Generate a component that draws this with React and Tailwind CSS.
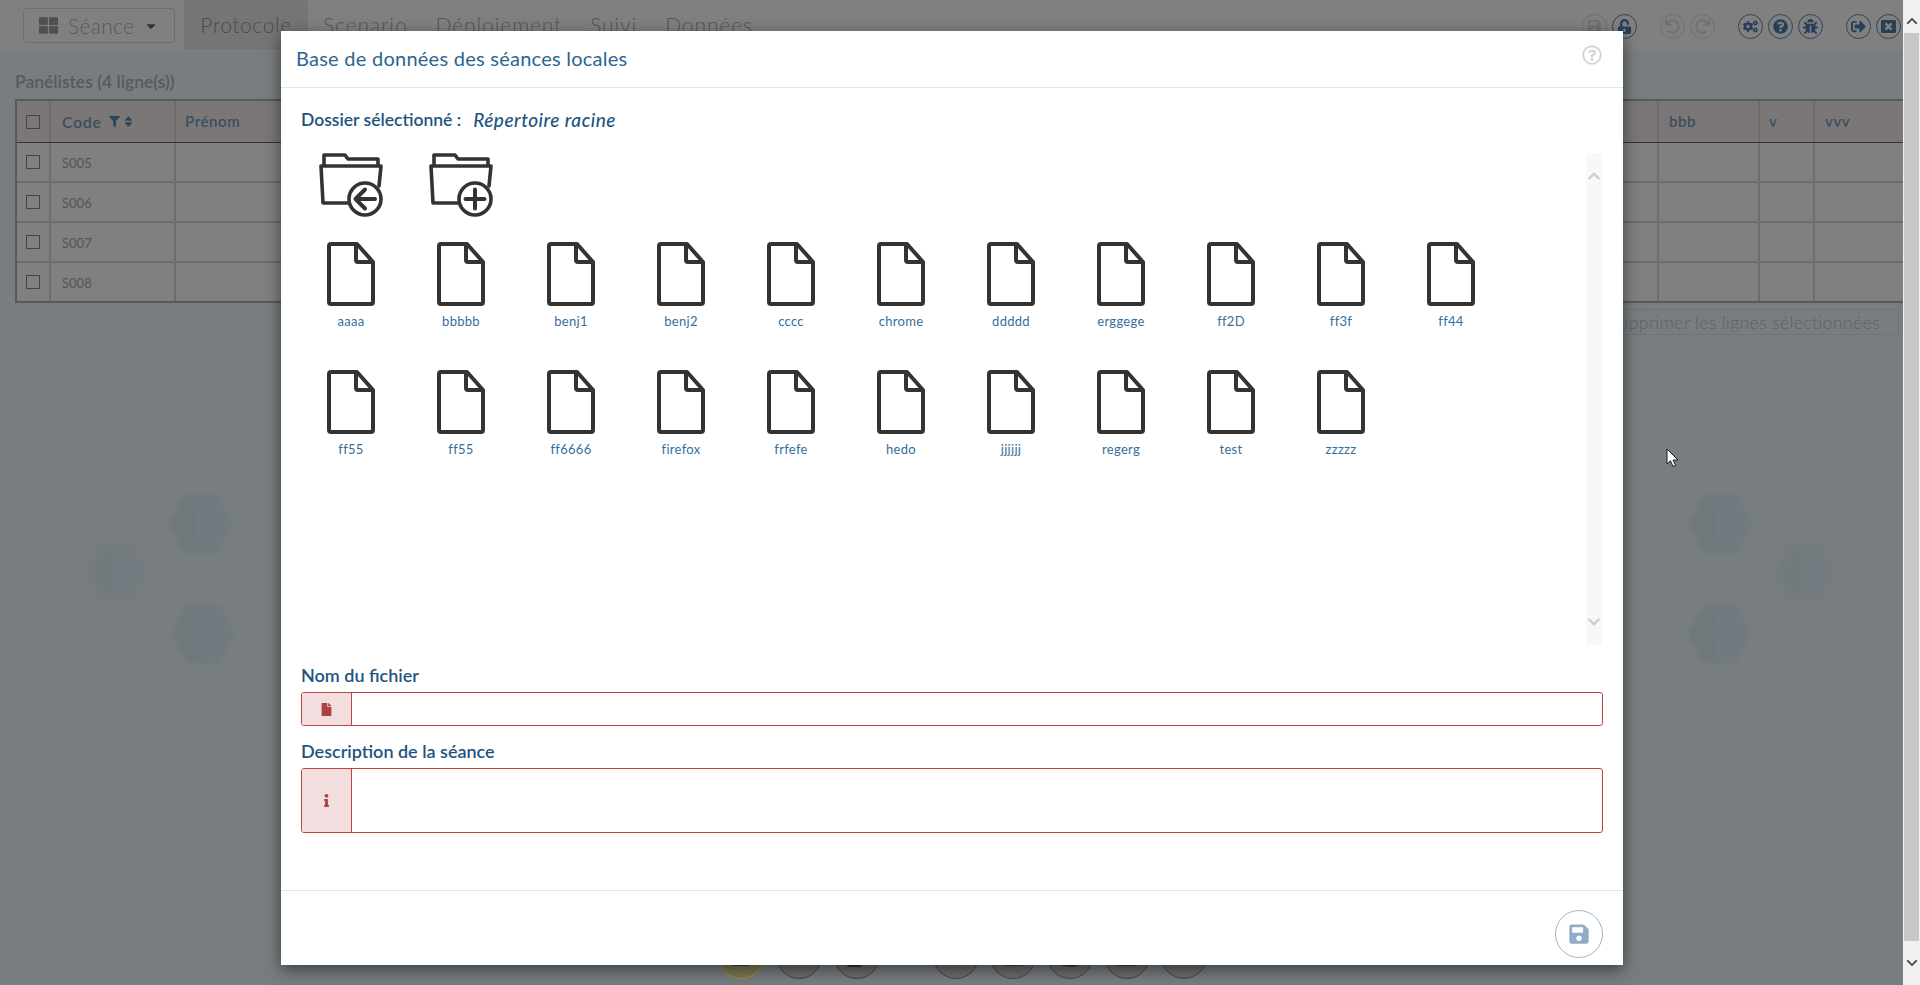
import React from 'react';
import {
  FaThLarge, FaCaretDown, FaFilter, FaSort, FaSave, FaUnlockAlt, FaUndo, FaRedo, FaCogs,
  FaQuestionCircle, FaBug, FaSignOutAlt, FaWindowClose, FaFile, FaInfo, FaChevronUp, FaChevronDown,
  FaRegQuestionCircle, FaFolderOpen, FaTable, FaCopy, FaDatabase, FaList,
} from 'react-icons/fa';

const FONT = "font-['Lato',sans-serif]";

const files = [
  ['aaaa', 'bbbbb', 'benj1', 'benj2', 'cccc', 'chrome', 'ddddd', 'erggege', 'ff2D', 'ff3f', 'ff44'],
  ['ff55', 'ff55', 'ff6666', 'firefox', 'frfefe', 'hedo', 'jjjjjj', 'regerg', 'test', 'zzzzz'],
];

const rows = ['S005', 'S006', 'S007', 'S008'];

const FileIcon = () => (
  <svg width="48" height="64" viewBox="0 0 48 64" fill="none" stroke="#333333" strokeWidth="4" strokeLinejoin="round">
    <path d="M30 2H4a2 2 0 0 0-2 2v56a2 2 0 0 0 2 2h40a2 2 0 0 0 2-2V20z" />
    <path d="M29 2v16a2 2 0 0 0 2 2h15" />
  </svg>
);

const FolderIcon = ({ plus }) => (
  <svg width="64" height="64" viewBox="0 0 64 64" fill="none" stroke="#333333" strokeWidth="3.6" strokeLinejoin="round" strokeLinecap="round">
    <path d="M5 12V2h21l3 4h30v6" />
    <path d="M29 50H4L2 13h60l-2 20" />
    <circle cx="46" cy="46" r="16" fill="#ffffff" />
    {plus ? (
      <path d="M36.500 46h19M46 36.500v19" strokeWidth="4" />
    ) : (
      <path d="M56 46H37M46 36.500L36.500 46l9.500 9.500" strokeWidth="4" />
    )}
  </svg>
);

const Hexagon = ({ className }) => (
  <svg className={className} width="64" height="60" viewBox="0 0 64 60">
    <polygon points="16,1 48,1 63,30 48,59 16,59 1,30" fill="#6f787a" />
    <polygon points="32,1 48,1 63,30 48,59 32,59 26,30" fill="#717a80" />
  </svg>
);

const ToolButton = ({ icon: Icon, dim }) => (
  <div className={`w-[25px] h-[25px] rounded-full border flex items-center justify-center ${dim ? 'border-[#6c7276] text-[#6c7276]' : 'border-[#2f4558] text-[#26405a]'}`}>
    <Icon className="text-[15px]" />
  </div>
);

const BottomButton = ({ icon: Icon, accent }) => (
  <div className={`w-[46px] h-[46px] rounded-full border flex items-center justify-center ${accent ? 'border-[#b08a3a] bg-[#7d7a55] text-[#23384a]' : 'border-[#3a4a58] bg-[#6f6d6d] text-[#23384a]'}`}>
    <Icon className="text-[22px]" />
  </div>
);

const Background = () => (
  <div className="flex-1 min-w-0 flex flex-col h-full bg-[#787d80] relative">
    <div className="h-[52px] shrink-0 bg-[#808080] border-b border-[#7a7f82] flex items-start">
      <div className="ml-[23px] mt-[8px] w-[152px] h-[35px] border border-[#6e6e6e] rounded flex items-center pl-[15px] gap-[10px] text-[#5a5a5a]">
        <FaThLarge className="text-[19px] text-[#505050]" />
        <span className="text-[21px] leading-none tracking-[0.3px] font-light">Séance</span>
        <FaCaretDown className="text-[14px] text-[#333]" />
      </div>
      <div className="ml-[9px] h-[50px] w-[124px] bg-[#757575] flex items-center justify-center text-[21px] tracking-[0.6px] font-light text-[#4c4c4c]">Protocole</div>
      <div className="flex items-center h-[50px] gap-[28px] ml-[15px] text-[21px] tracking-[0.9px] font-light text-[#555555]">
        <span>Scenario</span>
        <span>Déploiement</span>
        <span>Suivi</span>
        <span>Données</span>
      </div>
      <div className="ml-auto mt-[14px] mr-[2px] flex items-center">
        <div className="flex gap-[5px]">
          <ToolButton icon={FaSave} dim />
          <ToolButton icon={FaUnlockAlt} />
        </div>
        <div className="flex gap-[5px] ml-[23px]">
          <ToolButton icon={FaUndo} dim />
          <ToolButton icon={FaRedo} dim />
        </div>
        <div className="flex gap-[5px] ml-[23px]">
          <ToolButton icon={FaCogs} />
          <ToolButton icon={FaQuestionCircle} />
          <ToolButton icon={FaBug} />
        </div>
        <div className="flex gap-[5px] ml-[23px]">
          <ToolButton icon={FaSignOutAlt} />
          <ToolButton icon={FaWindowClose} />
        </div>
      </div>
    </div>

    <div className="pl-[15px] mt-[20px] mb-[1px] h-[26px] text-[17.500px] font-semibold text-[#555a5e] leading-5">Panélistes (4 ligne(s))</div>

    <div className="ml-[15px] border-t-2 border-b-2 border-l-2 border-[#565a5c]">
      <div className="flex h-[42px] bg-[#7b7777] border-b border-[#333] text-[15px] font-semibold tracking-[0.6px] text-[#3a4e60]">
        <div className="w-[34px] border-r-2 border-[#6d6d6d] flex items-center justify-center">
          <div className="w-[14px] h-[14px] border border-[#444]" />
        </div>
        <div className="w-[125px] border-r-2 border-[#6d6d6d] flex items-center pl-[11px]">
          <span className="text-[16px] tracking-[0.6px]">Code</span>
          <FaFilter className="text-[11px] text-[#2f4558] ml-[7px]" />
          <FaSort className="text-[13px] ml-[2px] text-[#2f4558]" />
        </div>
        <div className="flex-1 pl-[9px] flex items-center">Prénom</div>
        <div className="w-[101px] border-l-2 border-[#6d6d6d] pl-[10px] flex items-center">bbb</div>
        <div className="w-[55px] border-l-2 border-[#6d6d6d] pl-[9px] flex items-center">v</div>
        <div className="w-[90px] border-l-2 border-[#6d6d6d] pl-[10px] flex items-center">vvv</div>
      </div>
      {rows.map((code, i) => (
        <div key={code} className={`flex bg-[#808080] text-[13px] text-[#555] ${i < 3 ? 'h-[40px] border-b-2 border-[#6d6d6d]' : 'h-[38px]'}`}>
          <div className="w-[34px] border-r-2 border-[#6d6d6d] flex items-center justify-center">
            <div className="w-[14px] h-[14px] border border-[#444]" />
          </div>
          <div className="w-[125px] border-r-2 border-[#6d6d6d] flex items-center pl-[11px] pt-[3px]">{code}</div>
          <div className="flex-1" />
          <div className="w-[101px] border-l-2 border-[#6d6d6d]" />
          <div className="w-[55px] border-l-2 border-[#6d6d6d]" />
          <div className="w-[90px] border-l-2 border-[#6d6d6d]" />
        </div>
      ))}
    </div>

    <div className="flex justify-end mt-[6px] mr-[4px]">
      <div className="w-[300px] h-[26px] border border-[#6e7478] flex items-center justify-end pr-[18px] text-[18px] tracking-[0.2px] font-light whitespace-nowrap text-[#5c6266]">
        Supprimer les lignes sélectionnées
      </div>
    </div>

    <Hexagon className="absolute left-[169px] top-[494px] blur-[1.500px]" />
    <Hexagon className="absolute left-[85px] top-[543px] opacity-50 blur-[3px]" />
    <Hexagon className="absolute left-[171px] top-[604px] blur-[1.500px]" />
    <Hexagon className="absolute left-[1689px] top-[494px] blur-[1.500px]" />
    <Hexagon className="absolute left-[1774px] top-[543px] opacity-50 blur-[3px]" />
    <Hexagon className="absolute left-[1687px] top-[604px] blur-[1.500px]" />

    <svg className="absolute left-[1666px] top-[448px]" width="13" height="20" viewBox="0 0 13 20">
      <path d="M1 1v15l3.500-3.200L7 18.500l2.600-1.200L7 12h5z" fill="#ffffff" stroke="#111a22" strokeWidth="1" />
    </svg>

    <div className="mt-auto mb-[6px] pl-[718px] flex">
      <div className="flex gap-[12px]">
        <BottomButton icon={FaSave} accent />
        <BottomButton icon={FaList} />
        <BottomButton icon={FaCopy} />
      </div>
      <div className="flex gap-[11px] ml-[53px]">
        <BottomButton icon={FaFolderOpen} />
        <BottomButton icon={FaTable} />
        <BottomButton icon={FaDatabase} />
        <BottomButton icon={FaTable} />
        <BottomButton icon={FaCogs} />
      </div>
    </div>
  </div>
);

const Field = ({ label, icon: Icon, children, boxClass }) => (
  <div>
    <div className="text-[18px] font-semibold text-[#1f5480] h-[27px] leading-5 whitespace-nowrap">{label}</div>
    <div className={`flex border border-[#bd4342] rounded-[3px] overflow-hidden ${boxClass}`}>
      <div className="w-[50px] shrink-0 bg-[#f2dede] border-r border-[#bd4342] flex items-center justify-center text-[#a94442]">
        <Icon className="text-[13px]" />
      </div>
      {children}
    </div>
  </div>
);

const Modal = () => (
  <div className="absolute left-[281px] top-[31px] w-[1342px] h-[934px] bg-white flex flex-col shadow-[0_5px_15px_rgba(0,0,0,0.5)]">
    <div className="h-[57px] shrink-0 border-b border-[#e5e5e5] flex items-center justify-between pl-[15px] pr-[21px]">
      <span className="text-[20px] tracking-[0.25px] -mt-[2px] text-[#2b6590]">Base de données des séances locales</span>
      <FaRegQuestionCircle className="text-[20px] text-[#d6d6d6] -mt-[8px]" />
    </div>

    <div className="px-[20px] flex-1 min-h-0 flex flex-col">
      <div className="mt-[21px] h-[22px] flex items-center text-[17.500px] text-[#1f5480]">
        <span className="font-semibold">Dossier sélectionné :</span>
        <span className="italic font-medium text-[19px] tracking-[0.5px] ml-[12px]">Répertoire racine</span>
      </div>

      <div className="mt-[22px] h-[492px] shrink-0 flex pr-[1px]">
        <div className="flex-1 min-w-0 -ml-[5px]">
          <div className="flex h-[89px]">
            <div className="w-[110px] pl-[23px]"><FolderIcon /></div>
            <div className="w-[110px] pl-[23px]"><FolderIcon plus /></div>
          </div>
          {files.map((row, i) => (
            <div key={i} className="flex h-[128px]">
              {row.map((name, j) => (
                <div key={j} className="w-[110px] flex flex-col items-center">
                  <FileIcon />
                  <span className="mt-[7px] text-[13px] tracking-[0.3px] leading-4 text-[#336f9c]">{name}</span>
                </div>
              ))}
            </div>
          ))}
        </div>
        <div className="w-[16px] shrink-0 bg-[#f8f8f8] flex flex-col items-center justify-between py-[16px] text-[#cccccc]">
          <FaChevronUp className="text-[14px]" />
          <FaChevronDown className="text-[14px]" />
        </div>
      </div>

      <div className="mt-[20px] flex flex-col gap-[15px]">
        <Field label="Nom du fichier" icon={FaFile} boxClass="h-[34px]">
          <input className="flex-1 outline-none" />
        </Field>
        <Field label="Description de la séance" icon={FaInfo} boxClass="h-[65px]">
          <textarea className="flex-1 outline-none resize-none" />
        </Field>
      </div>
    </div>

    <div className="h-[75px] shrink-0 border-t border-[#e5e5e5] flex justify-end items-start pt-[19px] pr-[20px]">
      <div className="w-[48px] h-[48px] rounded-full border border-[#9db7cc] flex items-center justify-center text-[#8fadc6]">
        <FaSave className="text-[22px]" />
      </div>
    </div>
  </div>
);

const Scrollbar = () => (
  <div className="w-[17px] shrink-0 h-full bg-[#f1f1f1] flex flex-col items-center">
    <div className="h-[33px] flex items-start justify-center text-[#505050]">
      <FaChevronUp className="text-[12px] mt-[15px]" />
    </div>
    <div className="w-[15px] h-[908px] bg-[#c8c8c8]" />
    <div className="flex-1 flex items-center justify-center text-[#505050]">
      <FaChevronDown className="text-[12px]" />
    </div>
  </div>
);

const App = () => {
  return (
    <div className={`${FONT} w-[1920px] h-[985px] relative flex overflow-hidden`}>
      <Background />
      <Scrollbar />
      <Modal />
    </div>
  );
};

export default App;
